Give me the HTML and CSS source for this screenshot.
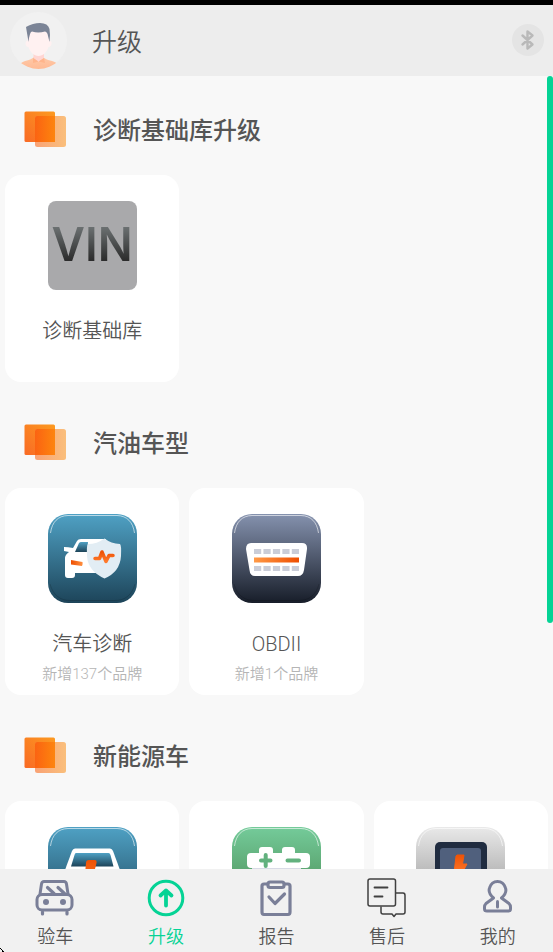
FILE: index.html
```html
<!DOCTYPE html>
<html lang="zh-CN">
<head>
    <meta charset="UTF-8">
    <meta name="viewport" content="width=device-width, initial-scale=1.0">
    <title>升级</title>
    <link rel="stylesheet" href="styles.css">
</head>
<body>
    <!-- shared shapes and gradients -->
    <svg class="defs" width="0" height="0" aria-hidden="true">
        <defs>
            <linearGradient id="orange" x1="0" y1="1" x2="1" y2="0">
                <stop offset="0" stop-color="#f96a25"/>
                <stop offset="1" stop-color="#fc9a20"/>
            </linearGradient>
            <linearGradient id="overlap" x1="0" y1="0" x2="1" y2="0">
                <stop offset="0" stop-color="#fb6312"/>
                <stop offset="1" stop-color="#fd850e"/>
            </linearGradient>
            <linearGradient id="peach" x1="0" y1="0" x2="1" y2="0">
                <stop offset="0" stop-color="#f9a275"/>
                <stop offset="1" stop-color="#fabf7c"/>
            </linearGradient>
            <linearGradient id="blue" x1="0" y1="0" x2="0" y2="1">
                <stop offset="0" stop-color="#4fa1c4"/>
                <stop offset="1" stop-color="#1d4459"/>
            </linearGradient>
            <linearGradient id="slate" x1="0" y1="0" x2="0" y2="1">
                <stop offset="0" stop-color="#8592ae"/>
                <stop offset="1" stop-color="#171d29"/>
            </linearGradient>
            <linearGradient id="green" x1="0" y1="0" x2="0" y2="1">
                <stop offset="0" stop-color="#74cb9a"/>
                <stop offset="1" stop-color="#45824a"/>
            </linearGradient>
            <linearGradient id="silver" x1="0" y1="0" x2="0" y2="1">
                <stop offset="0" stop-color="#e9e9e9"/>
                <stop offset="1" stop-color="#8c8c8c"/>
            </linearGradient>
            <linearGradient id="flame" x1="0" y1="0" x2="1" y2="0">
                <stop offset="0" stop-color="#ff9a48"/>
                <stop offset="1" stop-color="#ee4e00"/>
            </linearGradient>
            <linearGradient id="ember" x1="0" y1="0" x2="1" y2="0">
                <stop offset="0" stop-color="#ee4e00"/>
                <stop offset="1" stop-color="#ff9040"/>
            </linearGradient>
            <linearGradient id="beat" x1="0" y1="0" x2="0" y2="1">
                <stop offset="0" stop-color="#ee5205"/>
                <stop offset="1" stop-color="#ff7a2b"/>
            </linearGradient>
            <symbol id="stack" viewBox="0 0 42 36">
                <rect x="0.500" y="0.500" width="30.500" height="30.500" rx="1.500" fill="url(#orange)"/>
                <rect x="11" y="5" width="31" height="31" rx="2.500" fill="url(#peach)"/>
                <path d="M11 7a2 2 0 0 1 2-2h18v26H11z" fill="url(#overlap)"/>
            </symbol>
            <symbol id="shine" viewBox="0 0 89 89">
                <path d="M2.500 19C4 8 10 1.800 20 1.500H69C79 1.800 85 8 86.500 19" fill="none" stroke="#fff" stroke-opacity=".6"/>
                <path d="M2 70C5 81 12 86.500 22 86.500H67C77 86.500 84 81 87 70" fill="none" stroke="#000" stroke-opacity=".15"/>
            </symbol>
        </defs>
    </svg>

    <header class="topbar">
        <a class="avatar" href="#" aria-label="我的">
            <svg viewBox="0 0 57 57">
                <defs>
                    <clipPath id="round"><circle cx="28.500" cy="28.500" r="28.500"/></clipPath>
                    <linearGradient id="shirt" x1="0" y1="0" x2="0" y2="1">
                        <stop offset="0" stop-color="#ffc9a8"/>
                        <stop offset="1" stop-color="#ffba94"/>
                    </linearGradient>
                </defs>
                <circle cx="28.500" cy="28.500" r="28.500" fill="#f1f1f1"/>
                <g clip-path="url(#round)">
                    <path d="M10 52C14 48 20 49 24 45H33C37 49 43 48 48 52V57H10z" fill="url(#shirt)"/>
                    <path d="M23.500 41H34V46L28.500 50 23.500 46z" fill="#ffd5d2"/>
                    <path d="M23 46L28.500 49.500 34 46 35 51 28.500 49.500 23 51z" fill="#ffb58c"/>
                    <path d="M17.500 18H39.500V29Q42 28.500 41.500 32 41 35 38.500 35C37 40 33 44 28.500 44S20 40 18.500 35Q16 35 15.500 32 15.500 28.500 17.500 29z" fill="#fff1f1"/>
                    <path d="M18.500 30L16 15Q23 11 30 11 38 11 39.500 17 40.500 23 39.500 30L38 24Q37.500 20 35 19.500 28 21.500 22 19.500 19.500 20 18.500 30z" fill="#7b8496"/>
                </g>
            </svg>
        </a>
        <h1>升级</h1>
        <button class="bluetooth" aria-label="蓝牙">
            <svg viewBox="0 0 32 32"><path d="M10.500 11.500L20.500 20.500 15.500 24.500V7.500L20.500 11.500 10.500 20.500" fill="none" stroke="#b9b9b9" stroke-width="2.400" stroke-linecap="round" stroke-linejoin="round"/></svg>
        </button>
    </header>

    <main class="content">
        <section>
            <div class="section-head">
                <svg><use href="#stack"/></svg>
                <h2>诊断基础库升级</h2>
            </div>
            <div class="grid">
                <a class="card" href="#">
                    <span class="vin">VIN</span>
                    <span class="name">诊断基础库</span>
                </a>
            </div>
        </section>

        <section>
            <div class="section-head">
                <svg><use href="#stack"/></svg>
                <h2>汽油车型</h2>
            </div>
            <div class="grid">
                <a class="card" href="#">
                    <svg class="app" viewBox="0 0 89 89">
                        <rect width="89" height="89" rx="20" fill="url(#blue)"/>
                        <use href="#shine"/>
                        <path d="M33 25H58V59H27V61Q27 64 24 64H20Q17 64 17 61V44Q17 41 21 38L16 37V33Q20 33 25 34L29 27Q30 25 33 25z" fill="#fff"/>
                        <path d="M33 28H40L39 38H27L31 29Q32 28 33 28z" fill="url(#blue)"/>
                        <path d="M23 46L34.500 48Q35 50 34 52L23 50.500z" fill="url(#ember)"/>
                        <path d="M56.500 24.500Q63 29.500 72 30Q73.500 31 73 42 72 58 56.500 64.500 40 57 39 42 38.500 31 40 30 49 30 56.500 24.500z" fill="#e2edf4"/>
                        <path d="M47 44.500H51.500L54 38 58 47.500 61 41.500H65" fill="none" stroke="url(#beat)" stroke-width="3.500" stroke-linecap="round" stroke-linejoin="round"/>
                    </svg>
                    <span class="name">汽车诊断</span>
                    <span class="added">新增137个品牌</span>
                </a>
                <a class="card" href="#">
                    <svg class="app" viewBox="0 0 89 89">
                        <rect width="89" height="89" rx="20" fill="url(#slate)"/>
                        <use href="#shine"/>
                        <path d="M19 29H70Q75.500 29 75 35L72 56Q71 62 66 62H23Q18 62 17.500 56L14 35Q14 29 19 29z" fill="#fff"/>
                        <path d="M22 37.500H67M22 54.500H67" stroke="#cacdd8" stroke-width="5" stroke-dasharray="7.200 2.250"/>
                        <rect x="22" y="43.500" width="45" height="5" fill="url(#flame)"/>
                    </svg>
                    <span class="name">OBDII</span>
                    <span class="added">新增1个品牌</span>
                </a>
            </div>
        </section>

        <section>
            <div class="section-head">
                <svg><use href="#stack"/></svg>
                <h2>新能源车</h2>
            </div>
            <div class="grid">
                <a class="card" href="#" aria-label="新能源汽车">
                    <svg class="app" viewBox="0 0 89 89">
                        <rect width="89" height="89" rx="20" fill="url(#blue)"/>
                        <use href="#shine"/>
                        <path d="M27 21.500H62Q64 21.500 65 24L72 43V66H17V43L24 24Q25 21.500 27 21.500z" fill="#fff"/>
                        <path d="M28 26H60.500Q62 26 62.500 28L65.500 39.500H23L26.500 28Q27 26 28 26z" fill="url(#blue)"/>
                        <path d="M41 33H47Q49 33 48.500 36L47 42H53L42 58V47H37L38 36Q38 33 41 33z" fill="url(#beat)"/>
                    </svg>
                </a>
                <a class="card" href="#" aria-label="电池检测">
                    <svg class="app" viewBox="0 0 89 89">
                        <rect width="89" height="89" rx="20" fill="url(#green)"/>
                        <use href="#shine"/>
                        <path d="M27 26V23Q27 20 30 20H38Q41 20 41 23V26H50V23Q50 20 53 20H60Q63 20 63 23V26H74Q78 26 78 30V37Q78 41 74 41H19Q15 41 15 37V30Q15 26 19 26z" fill="#fff"/>
                        <rect x="20" y="41" width="49" height="28" fill="#d9dbe6"/>
                        <path d="M29 33.500H38.500M33.700 28V39M55.500 33.500H67" stroke="#62b17e" stroke-width="4" stroke-linecap="round"/>
                    </svg>
                </a>
                <a class="card" href="#" aria-label="充电桩">
                    <svg class="app" viewBox="0 0 89 89">
                        <rect width="89" height="89" rx="20" fill="url(#silver)"/>
                        <use href="#shine"/>
                        <rect x="19" y="15" width="52" height="64" rx="5" fill="#202c40"/>
                        <rect x="24" y="21" width="41" height="40" rx="3" fill="#50607d"/>
                        <path d="M41 28H48L46.500 37H51L45 48 44 42H38.500L40 29z" fill="url(#beat)" stroke="url(#beat)" stroke-width="1" stroke-linejoin="round"/>
                    </svg>
                </a>
            </div>
        </section>

        <div class="scroll-thumb"></div>
    </main>

    <nav class="tabs">
        <a href="#">
            <svg viewBox="0 0 40 40" fill="none" stroke="#7a7f98" stroke-width="3" stroke-linecap="round" stroke-linejoin="round">
                <path d="M5 16L6.500 6Q7 3.500 9 3.500H29Q31 3.500 31.500 6L33 16"/>
                <rect x="2" y="16.500" width="35" height="15.500" rx="5"/>
                <path d="M12.500 9.500L19 15.500M23 9.500L29.500 15.500M7.500 34V36M32 34V36" stroke-width="3.200"/>
                <circle cx="11" cy="24" r="3" fill="#7a7f98" stroke="none"/>
                <circle cx="28" cy="24" r="3" fill="#7a7f98" stroke="none"/>
            </svg>
            <span>验车</span>
        </a>
        <a class="active" href="#" aria-current="page">
            <svg viewBox="0 0 40 40" fill="none" stroke="#05d395" stroke-width="3" stroke-linecap="round" stroke-linejoin="round">
                <circle cx="20" cy="20" r="16.800"/>
                <path d="M20 27.500V12.500M14.500 17.500L20 12.500 25.500 17.500" stroke-width="3.800"/>
            </svg>
            <span>升级</span>
        </a>
        <a href="#">
            <svg viewBox="0 0 40 40" fill="none" stroke="#7a7f98" stroke-width="3.200" stroke-linejoin="round">
                <path d="M11 6H8Q6 6 6 8V34Q6 36.500 8 36.500H32Q34 36.500 34 34V8Q34 6 32 6H29"/>
                <rect x="12" y="4" width="16" height="5.500" rx="2"/>
                <path d="M13 19L19 25.500 28.500 16" stroke-linecap="round"/>
            </svg>
            <span>报告</span>
        </a>
        <a href="#">
            <svg viewBox="0 0 40 40" fill="none" stroke="#404040" stroke-width="1.500" stroke-linejoin="round">
                <path d="M28.500 15H36Q38 15 38 17.500V34Q38 36 36 36H29L27 38.500 25 36H16Q14 36 14 34V28.500"/>
                <rect x="1" y="1" width="27.500" height="27" rx="2"/>
                <path d="M7.500 9.500H20.500M7.500 18.500H15.500" stroke-width="1.800" stroke-linecap="round"/>
            </svg>
            <span>售后</span>
        </a>
        <a href="#">
            <svg viewBox="0 0 40 40" fill="none" stroke="#7a7f98" stroke-width="3" stroke-linecap="round" stroke-linejoin="round">
                <path d="M15.500 20C11.500 16.500 10.500 13 11.500 10Q13.500 3.500 19.500 3.500T27.500 10C28.500 13 27.500 16.500 23.500 20L31 25.500Q32.500 27 32.500 29V31Q32.500 33 30 33H9Q6.500 33 6.500 31V29Q6.500 27 8 25.500z"/>
                <path d="M19.500 23.500V29"/>
            </svg>
            <span>我的</span>
        </a>
    </nav>

    <svg class="pointer" viewBox="0 0 4 4" shape-rendering="crispEdges" aria-hidden="true"><path d="M0 0H1V1H2V2H1V1H0zM2 2H3V3H4V4H2z"/></svg>
</body>
</html>
```

FILE: styles.css
```css
* {
    margin: 0;
    padding: 0;
    box-sizing: border-box;
}

body {
    position: relative;
    height: 100vh;
    display: flex;
    flex-direction: column;
    border-top: 5px solid #000;
    background: #f8f8f8;
    color: #555;
    font-family: Roboto, "Noto Sans CJK SC", sans-serif;
    font-weight: 350;
    overflow: hidden;
}

a {
    color: inherit;
    text-decoration: none;
}

svg {
    display: block;
}

.defs {
    position: absolute;
}

.topbar {
    flex: none;
    display: flex;
    align-items: center;
    height: 71px;
    padding: 0 9px 0 10px;
    background: #ededed;
}

.avatar svg {
    width: 57px;
    height: 57px;
}

h1 {
    flex: 1;
    margin-left: 25px;
    padding-bottom: 2px;
    font-size: 25px;
    font-weight: inherit;
}

.bluetooth {
    width: 32px;
    height: 32px;
    margin-bottom: 2px;
    border: none;
    border-radius: 50%;
    background: #e4e4e4;
    cursor: pointer;
}

.content {
    flex: 1;
    min-height: 0;
    position: relative;
    display: flex;
    flex-direction: column;
    gap: 14px;
    padding: 7px 5px 0;
    overflow: hidden;
}

.section-head {
    display: flex;
    align-items: center;
    gap: 27px;
    height: 92px;
    padding-left: 19px;
}

.section-head svg {
    width: 42px;
    height: 36px;
}

h2 {
    padding-bottom: 2px;
    font-size: 24px;
    font-weight: 500;
}

.grid {
    display: grid;
    grid-template-columns: repeat(3, 1fr);
    gap: 10px;
}

.card {
    display: flex;
    flex-direction: column;
    align-items: center;
    height: 207px;
    padding-top: 26px;
    border-radius: 16px;
    background: #fff;
}

.app,
.vin {
    width: 89px;
    height: 89px;
}

.vin {
    border-radius: 8px;
    background: linear-gradient(#6a6f70 30%, #2a2a2a 68%) text, #a9a9ab;
    color: transparent;
    font-family: Inter, sans-serif;
    font-size: 46px;
    font-weight: 600;
    line-height: 87px;
    text-align: center;
}

.name {
    margin-top: 26px;
    font-size: 20px;
    line-height: 30px;
}

.added {
    margin-top: 3px;
    color: #b5b5b5;
    font-size: 15px;
    line-height: 24px;
}

.scroll-thumb {
    position: absolute;
    top: 0;
    right: 0;
    width: 6px;
    height: 69%;
    border-radius: 3px;
    background: #05d395;
}

.tabs {
    flex: none;
    display: grid;
    grid-template-columns: repeat(5, 1fr);
    height: 83px;
    padding-top: 9px;
    background: #f1f1f1;
}

.tabs a {
    display: flex;
    flex-direction: column;
    align-items: center;
    gap: 7px;
    font-size: 18px;
    line-height: 24px;
}

.tabs svg {
    width: 40px;
    height: 40px;
}

.tabs .active {
    color: #05d395;
}

.pointer {
    position: absolute;
    bottom: 0;
    left: 0;
    width: 4px;
    height: 4px;
}
```
